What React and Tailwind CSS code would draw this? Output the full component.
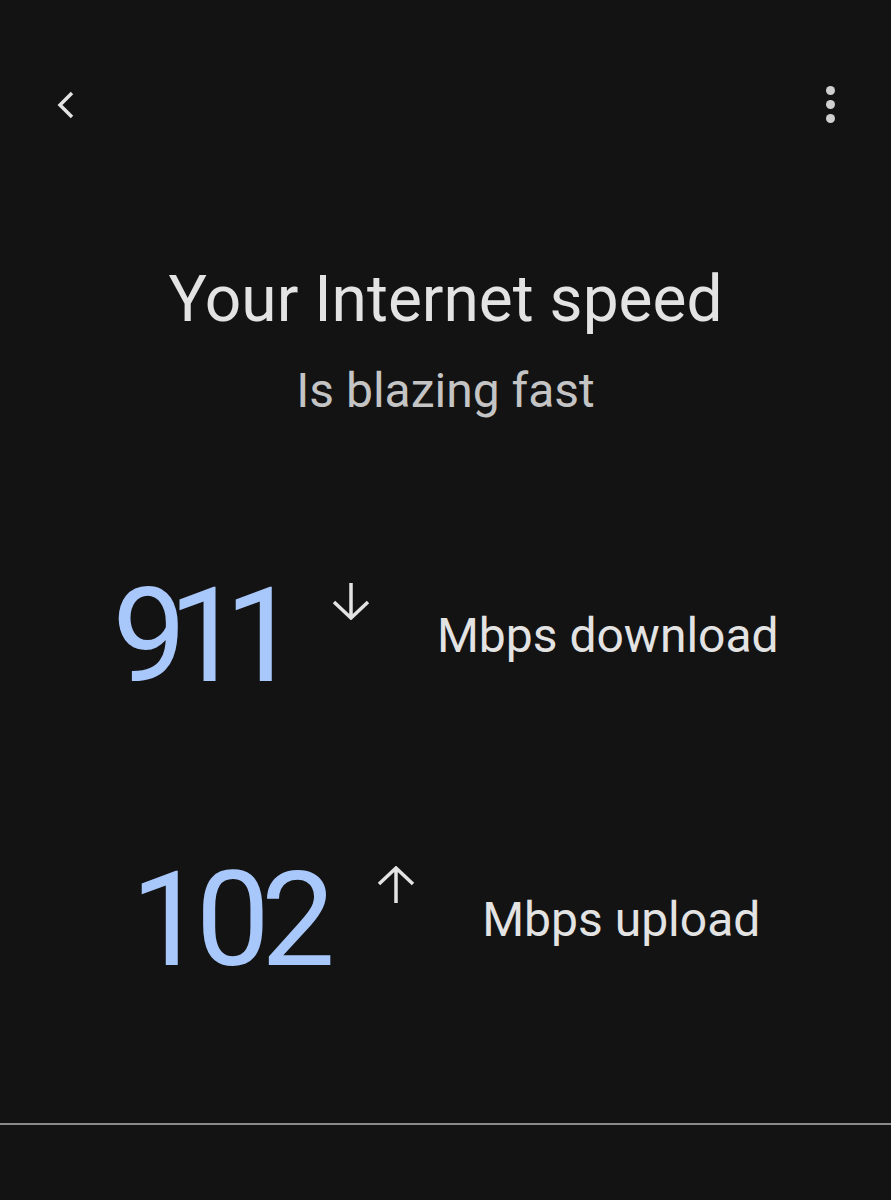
import React from 'react'

const font = { fontFamily: 'Roboto, "Open Sans", sans-serif' }

const SpeedRow = ({ value, label, up, numClass, arrowGap, labelGap }) => (
  <div className="flex items-center justify-center">
    <span className={`text-[132px] leading-none text-[#a8c7fa] ${numClass}`}>{value}</span>
    <div className={`self-start mt-[12px] text-[#e3e3e3] ${arrowGap}`}>
      <svg width="38" height="38" viewBox="0 0 38 38" fill="none" stroke="currentColor" strokeWidth="3.5">
        {up ? (
          <path d="M19 37V2M2 18 19 2l17 16" />
        ) : (
          <path d="M19 1v35M2 20l17 16 17-16" />
        )}
      </svg>
    </div>
    <span className={`text-[48px] leading-none text-[#e3e3e3] ${labelGap}`}>{label}</span>
  </div>
)

export default function App() {
  return (
    <div className="w-[891px] h-[1200px] bg-[#131313] flex flex-col" style={font}>
      <div className="flex items-center justify-between px-[54px] pt-[86px] text-[#e3e3e3]">
        <svg width="24" height="32" viewBox="0 0 24 32" fill="none" stroke="currentColor" strokeWidth="3.5">
          <path d="M18 4 6 16l12 12" />
        </svg>
        <div className="flex flex-col gap-[5px] pr-[2px]">
          <span className="w-[9px] h-[9px] rounded-full bg-[#d0d0d0]" />
          <span className="w-[9px] h-[9px] rounded-full bg-[#d0d0d0]" />
          <span className="w-[9px] h-[9px] rounded-full bg-[#d0d0d0]" />
        </div>
      </div>

      <div className="flex flex-col items-center mt-[145px]">
        <h1 className="text-[64px] leading-none text-[#e3e3e3]">Your Internet speed</h1>
        <p className="mt-[35px] text-[48px] leading-none text-[#c4c4c4]">Is blazing fast</p>
      </div>

      <div className="flex flex-col gap-[152px] mt-[155px]">
        <SpeedRow value="911" label="Mbps download" numClass="tracking-[-18px]" arrowGap="ml-[51px]" labelGap="ml-[67px]" />
        <SpeedRow value="102" label="Mbps upload" up numClass="tracking-[-9px]" arrowGap="ml-[51px]" labelGap="ml-[67px]" />
      </div>

      <div className="mt-auto mb-[75px] h-[2px] bg-[#8a8a8a]" />
    </div>
  )
}
